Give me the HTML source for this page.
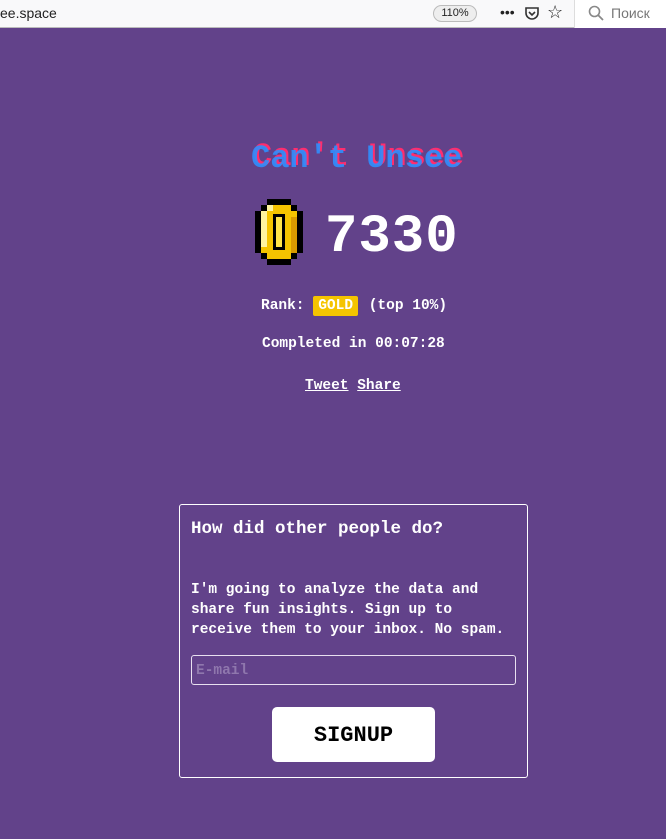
<!DOCTYPE html>
<html><head><meta charset="utf-8"><style>
*{margin:0;padding:0;box-sizing:border-box}
body{width:666px;height:839px;background:#62428a;font-family:"Liberation Mono",monospace;color:#fff;position:relative;overflow:hidden;font-weight:bold}
.bar{position:absolute;top:0;left:0;width:666px;height:28px;background:#f9f9fa;border-bottom:1px solid #bbb;font-family:"Liberation Sans",sans-serif;font-weight:normal;color:#222;font-size:14px}
.abs{position:absolute}
.t{font-size:14.5px;white-space:nowrap}
</style></head><body>
<div class="bar">
 <span class="abs" style="left:0;top:5px">ee.space</span>
 <span class="abs" style="left:433px;top:5px;width:44px;height:17px;border:1px solid #bbb;border-radius:9px;background:#eee;font-size:11px;text-align:center;line-height:15px">110%</span>
 <span class="abs" style="left:500px;top:4px;font-size:14px">•••</span>
 <svg class="abs" style="left:524px;top:5px" width="16" height="16"><path d="M2 3h12v5a6 6 0 0 1-12 0z" fill="none" stroke="#333" stroke-width="1.6"/><path d="M5 7l3 3 3-3" fill="none" stroke="#333" stroke-width="1.6"/></svg>
 <span class="abs" style="left:547px;top:2px;font-size:18px">☆</span>
 <div class="abs" style="left:574px;top:0;width:92px;height:28px;background:#fff;border-left:1px solid #ddd"></div>
 <svg class="abs" style="left:588px;top:5px" width="16" height="16"><circle cx="6.5" cy="6.5" r="5" fill="none" stroke="#888" stroke-width="1.6"/><path d="M10 10l5 5" stroke="#888" stroke-width="1.8"/></svg>
 <span class="abs" style="left:611px;top:5px;color:#777">Поиск</span>
</div>

<div class="abs" style="left:251px;top:140px;font-size:32px;white-space:nowrap">
 <span class="abs" style="left:2px;top:-2px;color:#ff2d6e">Can't&nbsp;Unsee</span>
 <span class="abs" style="left:0;top:0;color:#2e8fff;opacity:.9">Can't&nbsp;Unsee</span>
</div>

<svg class="abs" style="left:255px;top:199px" width="48" height="66" shape-rendering="crispEdges">
 <rect x="12" y="0" width="24" height="66" fill="#000"/>
 <rect x="6" y="6" width="36" height="54" fill="#000"/>
 <rect x="0" y="12" width="48" height="42" fill="#000"/>
 <rect x="12" y="6" width="24" height="54" fill="#f5c400"/>
 <rect x="6" y="12" width="36" height="42" fill="#f5c400"/>
 <rect x="6" y="12" width="6" height="36" fill="#fff4a0"/>
 <rect x="12" y="6" width="6" height="6" fill="#fff4a0"/>
 <rect x="36" y="18" width="6" height="36" fill="#d99a00"/>
 <rect x="18" y="15" width="12" height="36" fill="#000"/>
 <rect x="21" y="18" width="6" height="30" fill="#ffe44a"/>
</svg>
<div class="abs" style="left:325px;top:207px;font-size:54px;letter-spacing:1px">7330</div>

<div class="abs t" style="left:261px;top:298px">Rank: <span style="background:#f5c400;padding:2px 5px;border-radius:2px;margin-right:2px">GOLD</span> (top 10%)</div>
<div class="abs t" style="left:262px;top:336px">Completed in 00:07:28</div>
<div class="abs t" style="left:305px;top:378px"><u>Tweet</u> <u>Share</u></div>

<div class="abs" style="left:179px;top:504px;width:349px;height:274px;border:1px solid #fff;border-radius:3px"></div>
<div class="abs" style="left:191px;top:519px;font-size:17.5px;white-space:nowrap">How did other people do?</div>
<div class="abs t" style="left:191px;top:580px;line-height:20px">I'm going to analyze the data and<br>share fun insights. Sign up to<br>receive them to your inbox. No spam.</div>
<div class="abs" style="left:191px;top:655px;width:325px;height:30px;border:1px solid #e8e0f0;border-radius:3px"></div>
<div class="abs t" style="left:196px;top:663px;color:#8f77ad">E-mail</div>
<div class="abs" style="left:272px;top:707px;width:163px;height:55px;background:#fff;border-radius:5px;color:#000;font-size:22px;text-align:center;line-height:57px">SIGNUP</div>
</body></html>
